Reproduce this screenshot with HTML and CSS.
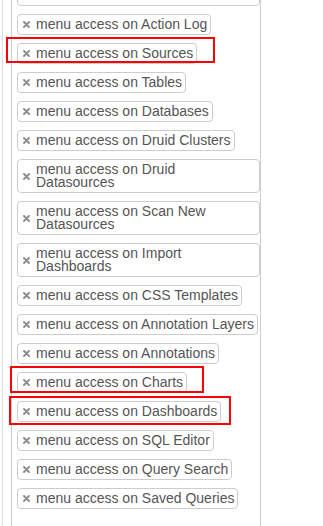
FILE: index.html
```html
<!DOCTYPE html>
<html lang="en">
<head>
    <meta charset="UTF-8">
    <meta name="viewport" content="width=device-width, initial-scale=1.0">
    <title>Permissions</title>
    <link rel="stylesheet" href="styles.css">
</head>
<body>
    <div class="page">
        <div class="panel">
            <ul class="choices" id="choices">
                <li class="choice choice-cut"></li>
            </ul>
        </div>

        <!-- highlight marks drawn over the list -->
        <div class="mark mark-sources"></div>
        <div class="mark mark-charts"></div>
        <div class="mark mark-dashboards"></div>
    </div>

    <script>
// Permissions shown in the multi select
const permissions = [
    "menu access on Action Log",
    "menu access on Sources",
    "menu access on Tables",
    "menu access on Databases",
    "menu access on Druid Clusters",
    "menu access on Druid Datasources",
    "menu access on Scan New Datasources",
    "menu access on Import Dashboards",
    "menu access on CSS Templates",
    "menu access on Annotation Layers",
    "menu access on Annotations",
    "menu access on Charts",
    "menu access on Dashboards",
    "menu access on SQL Editor",
    "menu access on Query Search",
    "menu access on Saved Queries"
];

const removeIcon = `<svg width="7" height="7" viewBox="0 0 7 7">
    <path d="M1 1 L6 6 M6 1 L1 6" stroke="#8c8c8c" stroke-width="1.9" stroke-linecap="round"/>
</svg>`;

function loadChoices() {
    const list = document.getElementById('choices');
    permissions.forEach(name => {
        list.innerHTML += `<li class="choice">
            <span class="choice-remove">${removeIcon}</span>
            <span class="choice-text">${name}</span>
        </li>`;
    });
}

loadChoices();
    </script>
</body>
</html>
```

FILE: styles.css
```css
body {
    margin: 0;
    padding: 0;
    background-color: #fff;
    font-family: "Liberation Sans", Arial, sans-serif;
    font-size: 14px;
    color: #555;
    overflow: hidden;
}

.page {
    position: relative;
    height: 526px;
    overflow: hidden;
}

.panel {
    display: flow-root;
    margin-left: 2px;
    padding-left: 8px;
    height: 100%;
    border-left: 1px solid #dcdcdc;
}

.choices {
    box-sizing: border-box;
    width: 250px;
    min-height: 600px;
    margin: -40px 0 0 0;
    padding: 8px 0 0 5px;
    list-style: none;
    border: 1px solid #ccc;
    border-radius: 4px;
    display: flex;
    flex-direction: column;
    align-items: flex-start;
    gap: 8px;
}

.choice {
    box-sizing: border-box;
    max-width: 100%;
    display: flex;
    align-items: center;
    padding: 3px 3px 3px 4px;
    border: 1px solid #ccc;
    border-radius: 4px;
    background-color: #fff;
    line-height: 13px;
}

.choice-cut {
    width: 100%;
    height: 37px;
}

.choice-remove {
    flex: none;
    display: flex;
    width: 13px;
    padding-left: 1px;
}

.choice-text {
    color: #555;
}

.mark {
    position: absolute;
    box-sizing: border-box;
    border: 2px solid #f00;
}

.mark-sources {
    left: 6px;
    top: 37px;
    width: 209px;
    height: 26px;
}

.mark-charts {
    left: 10px;
    top: 366px;
    width: 194px;
    height: 27px;
}

.mark-dashboards {
    left: 9px;
    top: 396px;
    width: 222px;
    height: 29px;
}
```
